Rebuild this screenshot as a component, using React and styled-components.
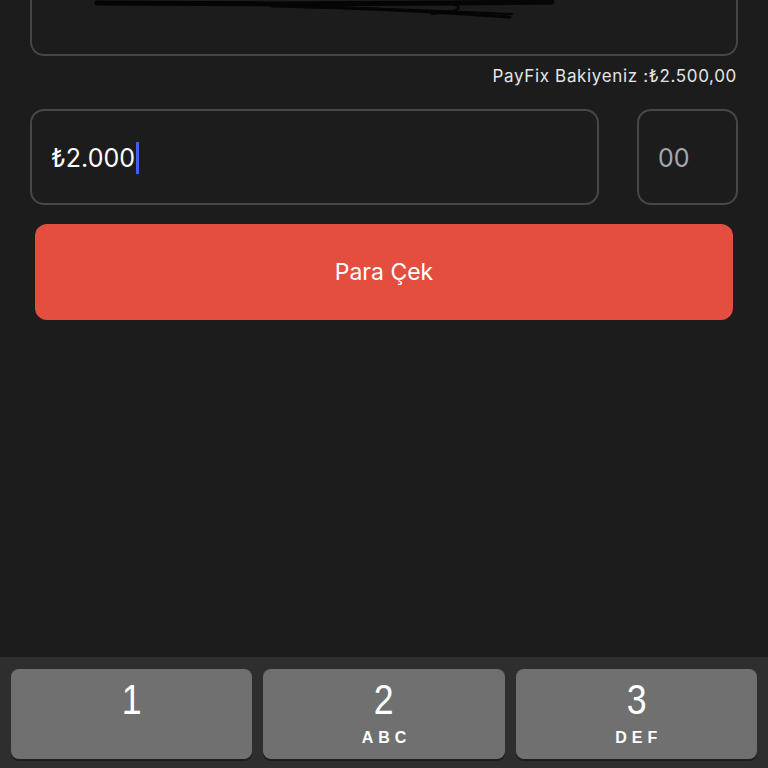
import React from "react";
import styled, { createGlobalStyle } from "styled-components";

const GlobalStyle = createGlobalStyle`
  html, body {
    margin: 0;
    padding: 0;
    background: #1c1c1c;
    font-family: Inter, "Open Sans", sans-serif;
  }
`;

const Screen = styled.div`
  width: 768px;
  height: 768px;
  display: flex;
  flex-direction: column;
  background: #1c1c1c;
  overflow: hidden;
`;

const Content = styled.div`
  flex: 1;
  display: flex;
  flex-direction: column;
  padding: 0 30px;
  margin-top: -40px;
`;

const AccountBox = styled.div`
  position: relative;
  height: 92px;
  border: 2px solid #454545;
  border-radius: 14px;
  overflow: hidden;
`;

const Scribble = styled.svg`
  position: absolute;
  left: 0;
  top: 0;
`;

const Balance = styled.div`
  align-self: flex-end;
  margin-top: 10px;
  margin-right: 1px;
  color: #e4e4e4;
  font-size: 17px;
  letter-spacing: 0.65px;
`;

const AmountRow = styled.div`
  display: flex;
  gap: 38px;
  margin-top: 23px;
`;

const Field = styled.div`
  box-sizing: border-box;
  height: 96px;
  border: 2px solid #474747;
  border-radius: 14px;
  display: flex;
  align-items: center;
  padding-left: ${p => p.$pad}px;
  padding-top: 2px;
  flex: ${p => (p.$grow ? 1 : "none")};
  width: ${p => (p.$grow ? "auto" : "101px")};
  color: ${p => p.$color};
  font-size: 25px;
`;

const Caret = styled.span`
  display: inline-block;
  width: 3px;
  height: 32px;
  margin-left: 1px;
  background: #3d62f2;
  vertical-align: middle;
`;

const SubmitButton = styled.button`
  margin: 19px 5px 0;
  height: 96px;
  border: none;
  border-radius: 12px;
  background: #e44e3e;
  color: #fff;
  font-family: Inter, "Open Sans", sans-serif;
  font-size: 23px;
`;

const Keyboard = styled.div`
  height: 111px;
  box-sizing: border-box;
  background: #2e2e2e;
  padding: 12px 11px 0;
  display: grid;
  grid-template-columns: repeat(3, 1fr);
  gap: 11px;
`;

const Key = styled.div`
  height: 90px;
  border-radius: 8px;
  background: #707070;
  box-shadow: 0 2px 0 #1e1e1e;
  display: flex;
  flex-direction: column;
  align-items: center;
  color: #fff;
  font-family: "Liberation Sans", Arial, sans-serif;
`;

const Digit = styled.div`
  font-size: 42px;
  font-weight: 300;
  line-height: 1;
  margin-top: 10px;
  transform: scaleX(0.85);
`;

const Letters = styled.div`
  font-size: 16px;
  font-weight: 700;
  letter-spacing: 5px;
  margin-top: 8px;
  padding-left: 5px;
`;

const keys = [
  { digit: "1", letters: "" },
  { digit: "2", letters: "ABC" },
  { digit: "3", letters: "DEF" },
];

export default function App() {
  return (
    <Screen>
      <GlobalStyle />
      <Content>
        <AccountBox>
          <Scribble width="708" height="92" viewBox="0 0 708 92">
            <g stroke="#050505" strokeLinecap="round" fill="none">
              <path d="M65 41 L250 42 L420 41 L520 40" strokeWidth="5" />
              <path d="M240 44 Q330 46 400 50 L478 55" strokeWidth="3" />
              <path d="M300 45 Q360 47 410 49 L480 52" strokeWidth="2" />
              <path d="M420 42 Q440 48 400 52" strokeWidth="2" />
            </g>
          </Scribble>
        </AccountBox>
        <Balance>PayFix Bakiyeniz :₺2.500,00</Balance>
        <AmountRow>
          <Field $grow $pad={19} $color="#ffffff">
            ₺2.000<Caret />
          </Field>
          <Field $pad={19} $color="#a3a8ad">00</Field>
        </AmountRow>
        <SubmitButton>Para Çek</SubmitButton>
      </Content>
      <Keyboard>
        {keys.map(k => (
          <Key key={k.digit}>
            <Digit>{k.digit}</Digit>
            {k.letters && <Letters>{k.letters}</Letters>}
          </Key>
        ))}
      </Keyboard>
    </Screen>
  );
}
